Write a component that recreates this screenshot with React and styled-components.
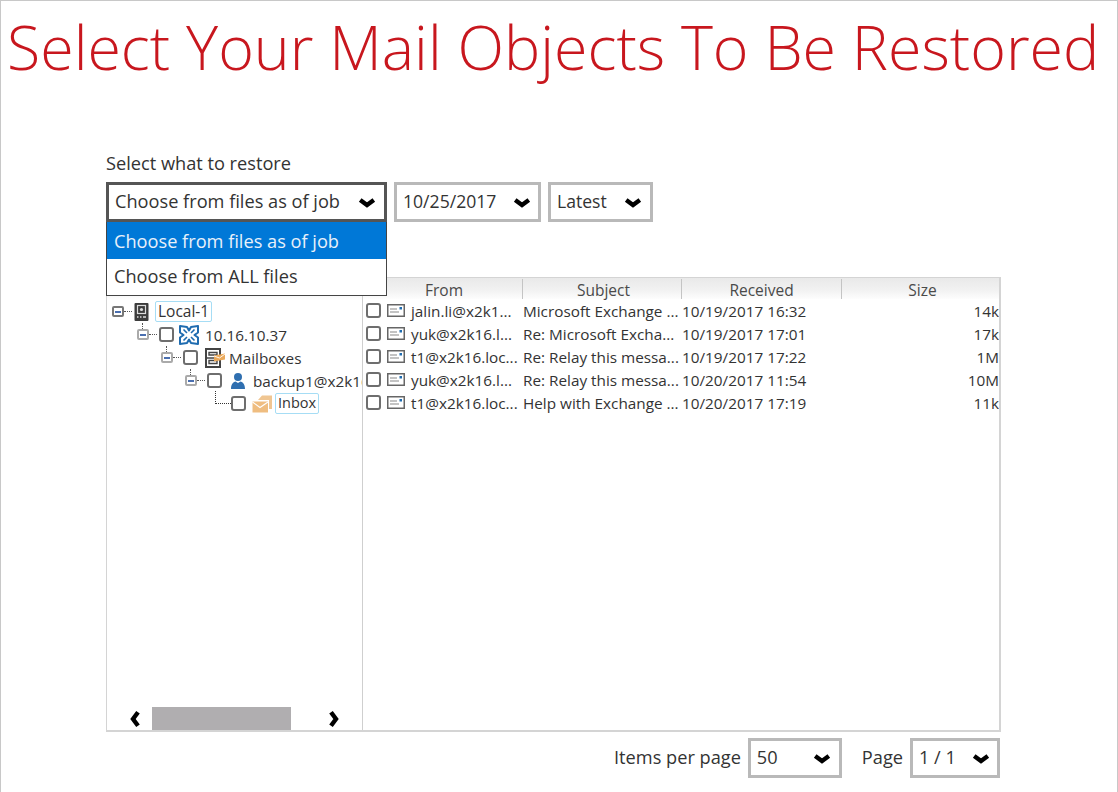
import React from "react";
import styled, { createGlobalStyle } from "styled-components";

const GlobalStyle = createGlobalStyle`
  html, body {
    margin: 0;
    padding: 0;
    background: #fff;
  }
  body {
    font-family: "Open Sans", "Liberation Sans", sans-serif;
    color: #333;
  }
`;

const Frame = styled.div`
  box-sizing: border-box;
  width: 1118px;
  height: 792px;
  border: 1px solid #c8c8c8;
  border-bottom: 0;
  overflow: hidden;
`;

const Title = styled.h1`
  margin: 0;
  padding: 5px 0 0 6px;
  height: 88px;
  box-sizing: border-box;
  font-size: 60.9px;
  line-height: 82px;
  font-weight: 300;
  color: #c8171e;
  white-space: nowrap;
`;

const Content = styled.div`
  margin: 0 0 0 105px;
  width: 895px;
`;

const FieldLabel = styled.div`
  margin-top: 61px;
  height: 32px;
  font-size: 18.2px;
  line-height: 26px;
`;

const SelectRow = styled.div`
  display: flex;
  gap: 7px;
`;

const SelectWrap = styled.div`
  position: relative;
`;

const SelectBox = styled.div`
  box-sizing: border-box;
  width: ${p => p.$width}px;
  height: ${p => p.$height || 40}px;
  border: 3px solid ${p => (p.$open ? "#555" : "#b9b9b9")};
  display: flex;
  align-items: center;
  justify-content: space-between;
  padding: 0 ${p => p.$padRight || 8}px 2px 6px;
  font-size: ${p => p.$size || 18.2}px;
  background: #fff;
`;

const Menu = styled.div`
  position: absolute;
  top: 40px;
  left: 0;
  right: 0;
  box-sizing: border-box;
  height: 74px;
  border: 1px solid #444;
  border-top: 0;
  background: #fff;
  z-index: 2;
`;

const MenuItem = styled.div`
  height: ${p => p.$height}px;
  display: flex;
  align-items: center;
  padding: 0 0 ${p => (p.$active ? 0 : 2)}px 7px;
  box-sizing: border-box;
  font-size: 18.2px;
  background: ${p => (p.$active ? "#0078d7" : "#fff")};
  color: ${p => (p.$active ? "#e8f0fa" : "#333")};
`;

const Table = styled.div`
  box-sizing: border-box;
  margin-top: 55px;
  height: 455px;
  border: solid #d4d4d4;
  border-width: 1px 2px 2px 1px;
  display: flex;
`;

const TreePane = styled.div`
  width: 255px;
  flex: none;
  border-right: 1px solid #cfcfcf;
  display: flex;
  flex-direction: column;
  overflow: hidden;
`;

const HeaderBand = styled.div`
  height: 22px;
  flex: none;
  background: linear-gradient(#e9e9e9, #f1f1f1 55%, #fdfdfd);
`;

const TreeRow = styled.div`
  height: 23px;
  flex: none;
  display: flex;
  align-items: center;
  padding-left: ${p => p.$indent}px;
  white-space: nowrap;
`;

const Expander = styled.span`
  position: relative;
  box-sizing: border-box;
  flex: none;
  width: 12px;
  height: 11px;
  margin-right: 10px;
  border: 2px solid ${p => (p.$root ? "#777" : "#aaa")};
  border-radius: 2px;
  background: #fff;

  &::before {
    content: "";
    position: absolute;
    left: 1px;
    right: 1px;
    top: 2.5px;
    height: 2px;
    background: #4a6fb0;
  }

  &::after {
    content: "";
    position: absolute;
    left: 10px;
    top: 3px;
    width: 8px;
    border-top: 1px dotted #555;
  }
`;

const Stem = styled.span`
  position: absolute;
  left: 3px;
  top: -8px;
  height: 6px;
  border-left: 1px dotted #555;
`;

const Elbow = styled.span`
  box-sizing: border-box;
  flex: none;
  width: 16px;
  height: 13px;
  margin-top: -12px;
  border-left: 1px dotted #333;
  border-bottom: 1px dotted #333;
`;

const Checkbox = styled.span`
  box-sizing: border-box;
  flex: none;
  width: 15px;
  height: 15px;
  margin-right: ${p => p.$gap || 0}px;
  border: 2px solid #6e6e6e;
  border-radius: 3px;
  background: #fff;
`;

const NodeText = styled.span`
  margin-left: ${p => p.$gap || 6}px;
  font-weight: ${p => p.$weight || 400};
  font-size: ${p => p.$size || 15.3}px;
`;

const NodeChip = styled.span`
  box-sizing: border-box;
  height: 21px;
  margin-left: ${p => p.$gap}px;
  padding: 0 2px;
  border: 1px solid #a6ddf5;
  border-radius: 2px;
  font-size: ${p => p.$size || 14.5}px;
  line-height: 18px;
`;

const TreeScroll = styled.div`
  margin-top: auto;
  height: 23px;
  flex: none;
  display: flex;
  align-items: center;
  padding-left: 19px;
`;

const ScrollThumb = styled.div`
  width: 139px;
  height: 23px;
  margin: 0 34px 0 8px;
  background: #b0aeb0;
`;

const ListPane = styled.div`
  flex: 1;
  min-width: 0;
  overflow: hidden;
`;

const Columns = "160px 159px 160px 1fr";

const ListHeader = styled(HeaderBand)`
  display: grid;
  height: 21px;
  grid-template-columns: ${Columns};
`;

const HeaderCell = styled.div`
  box-sizing: border-box;
  text-align: center;
  padding-left: ${p => p.$shift || 0}px;
  font-size: 15.5px;
  color: #4a4a4a;
  border-right: ${p => (p.$last ? "0" : "1px solid #c4c4c4")};
  height: 20px;
  margin-top: 1px;
  line-height: 22px;
`;

const ListRow = styled.div`
  display: grid;
  grid-template-columns: ${Columns};
  height: 23px;
  align-items: center;
  font-size: 15.3px;
  white-space: nowrap;
`;

const FromCell = styled.div`
  display: flex;
  align-items: center;
  padding-left: 3px;
  overflow: hidden;
`;

const FromText = styled.span`
  margin-left: 6px;
`;

const TextCell = styled.div`
  overflow: hidden;
`;

const SizeCell = styled.div`
  text-align: right;
`;

const Footer = styled.div`
  margin-top: 6px;
  padding-right: 1px;
  display: flex;
  justify-content: flex-end;
  align-items: center;
  font-size: 18.2px;
`;

const FooterLabel = styled.span`
  margin-left: ${p => p.$before || 0}px;
  margin-right: 7px;
  padding-bottom: 2px;
`;

const ChevronSvg = styled.svg`
  flex: none;
  margin-top: ${p => p.$drop || 0}px;
  transform: rotate(${p => p.$rot}deg);
`;

const Icon = styled.svg`
  flex: none;
`;

const MailGlyph = styled(Icon)`
  margin-left: 6px;
`;

const Chevron = ({ dir = "down" }) => {
  const rot = { down: 0, left: 90, right: -90 }[dir];
  return (
    <ChevronSvg width="18" height="12" viewBox="0 0 18 12" $rot={rot} $drop={dir === "down" ? 4 : 0}>
      <path d="M2.2 3 L9 8 L15.8 3" fill="none" stroke="#000" strokeWidth="4.4" />
    </ChevronSvg>
  );
};

const ServerIcon = () => (
  <Icon width="15" height="18" viewBox="0 0 15 18">
    <rect x="0.5" y="0" width="14" height="18" rx="1" fill="#3c3c3c" />
    <rect x="3.5" y="2.5" width="8" height="8" fill="none" stroke="#ddd" strokeWidth="1.2" />
    <circle cx="7.5" cy="6.5" r="1.6" fill="#ddd" />
    <path d="M3 14h1.5M6 14h1.5M9 14h3" stroke="#ddd" strokeWidth="1.4" />
  </Icon>
);

const ExchangeIcon = () => (
  <Icon width="20" height="20" viewBox="0 0 20 20">
    <path
      d="M1 1 L8 2 L10 5.5 L12 2 L19 1 L19 7.5 L15.5 10 L19 12.5 L19 19 L12 18 L10 14.5 L8 18 L1 19 L1 12.5 L4.5 10 L1 7.5 Z"
      fill="#fff"
      stroke="#1f6cb0"
      strokeWidth="2"
      strokeLinejoin="round"
    />
    <path d="M4.5 4.5 L8 8 M15.5 4.5 L12 8 M4.5 15.5 L8 12 M15.5 15.5 L12 12" stroke="#1f6cb0" strokeWidth="1.6" />
  </Icon>
);

const MailboxesIcon = () => (
  <Icon width="20" height="20" viewBox="0 0 20 20">
    <rect x="1" y="1" width="14" height="18" fill="#fff" stroke="#444" strokeWidth="2" />
    <path d="M4 4.5h8v2.5H4zM4 12.5h8v3H4z" fill="none" stroke="#444" strokeWidth="1.4" />
    <path d="M1 10h14" stroke="#444" strokeWidth="1.5" />
    <path d="M9 7.5 L20 5.5 V11.5 L9 13.5 Z" fill="#eba95a" />
    <path d="M9 8 L14.5 10 L20 6" fill="none" stroke="#fff" strokeWidth="0.9" />
  </Icon>
);

const UserIcon = () => (
  <Icon width="18" height="18" viewBox="0 0 18 18">
    <circle cx="9" cy="5" r="4" fill="#2f6fb0" />
    <path d="M2 17 C2 11.5 5 9.8 6.5 9.5 L9 11 L11.5 9.5 C13 9.8 16 11.5 16 17 Z" fill="#2f6fb0" />
  </Icon>
);

const InboxIcon = () => (
  <Icon width="20" height="18" viewBox="0 0 20 18">
    <path d="M6 5 L10 0.5 H20 V14 H17 V5 Z" fill="#f0c692" />
    <path d="M0.5 6.5 H16 V17.5 H0.5 Z" fill="#efbd80" />
    <path d="M0.5 7 L8 12.5 L16 7" fill="none" stroke="#fff" strokeWidth="1.1" />
  </Icon>
);

const MailIcon = () => (
  <MailGlyph width="18" height="13" viewBox="0 0 18 13">
    <rect x="0.75" y="0.75" width="16.5" height="11.5" fill="#fff" stroke="#666" strokeWidth="1.5" />
    <path d="M3 5h7M3 8h9" stroke="#888" strokeWidth="1.2" />
    <rect x="12.5" y="3" width="2.5" height="2.5" fill="#1f6cb0" />
  </MailGlyph>
);

const messages = [
  { from: "jalin.li@x2k1...", subject: "Microsoft Exchange ...", received: "10/19/2017 16:32", size: "14k" },
  { from: "yuk@x2k16.l...", subject: "Re: Microsoft Excha...", received: "10/19/2017 17:01", size: "17k" },
  { from: "t1@x2k16.loc...", subject: "Re: Relay this messa...", received: "10/19/2017 17:22", size: "1M" },
  { from: "yuk@x2k16.l...", subject: "Re: Relay this messa...", received: "10/20/2017 11:54", size: "10M" },
  { from: "t1@x2k16.loc...", subject: "Help with Exchange ...", received: "10/20/2017 17:19", size: "11k" }
];

const App = () => (
  <Frame>
    <GlobalStyle />
    <Title>Select Your Mail Objects To Be Restored</Title>
    <Content>
      <FieldLabel>Select what to restore</FieldLabel>
      <SelectRow>
        <SelectWrap>
          <SelectBox $width={281} $open>
            Choose from files as of job
            <Chevron />
          </SelectBox>
          <Menu>
            <MenuItem $height={37} $active>Choose from files as of job</MenuItem>
            <MenuItem $height={36}>Choose from ALL files</MenuItem>
          </Menu>
        </SelectWrap>
        <SelectBox $width={147} $padRight={7} $size={17.6}>
          10/25/2017
          <Chevron />
        </SelectBox>
        <SelectBox $width={105} $size={17.6}>
          Latest
          <Chevron />
        </SelectBox>
      </SelectRow>
      <Table>
        <TreePane>
          <HeaderBand />
          <TreeRow $indent={5}>
            <Expander $root />
            <ServerIcon />
            <NodeChip $gap={6} $size={15.5}>Local-1</NodeChip>
          </TreeRow>
          <TreeRow $indent={30}>
            <Expander><Stem /></Expander>
            <Checkbox $gap={5} />
            <ExchangeIcon />
            <NodeText>10.16.10.37</NodeText>
          </TreeRow>
          <TreeRow $indent={54}>
            <Expander><Stem /></Expander>
            <Checkbox $gap={7} />
            <MailboxesIcon />
            <NodeText $gap={4}>Mailboxes</NodeText>
          </TreeRow>
          <TreeRow $indent={78}>
            <Expander><Stem /></Expander>
            <Checkbox $gap={7} />
            <UserIcon />
            <NodeText $gap={6} $weight={500}>backup1@x2k16.local</NodeText>
          </TreeRow>
          <TreeRow $indent={108}>
            <Elbow />
            <Checkbox $gap={6} />
            <InboxIcon />
            <NodeChip $gap={3}>Inbox</NodeChip>
          </TreeRow>
          <TreeScroll>
            <Chevron dir="left" />
            <ScrollThumb />
            <Chevron dir="right" />
          </TreeScroll>
        </TreePane>
        <ListPane>
          <ListHeader>
            <HeaderCell $shift={3}>From</HeaderCell>
            <HeaderCell $shift={3}>Subject</HeaderCell>
            <HeaderCell>Received</HeaderCell>
            <HeaderCell $shift={4} $last>Size</HeaderCell>
          </ListHeader>
          {messages.map((m, i) => (
            <ListRow key={i}>
              <FromCell>
                <Checkbox />
                <MailIcon />
                <FromText>{m.from}</FromText>
              </FromCell>
              <TextCell>{m.subject}</TextCell>
              <TextCell>{m.received}</TextCell>
              <SizeCell>{m.size}</SizeCell>
            </ListRow>
          ))}
        </ListPane>
      </Table>
      <Footer>
        <FooterLabel>Items per page</FooterLabel>
        <SelectBox $width={94}>
          50
          <Chevron />
        </SelectBox>
        <FooterLabel $before={20}>Page</FooterLabel>
        <SelectBox $width={90} $padRight={7}>
          1 / 1
          <Chevron />
        </SelectBox>
      </Footer>
    </Content>
  </Frame>
);

export default App;
